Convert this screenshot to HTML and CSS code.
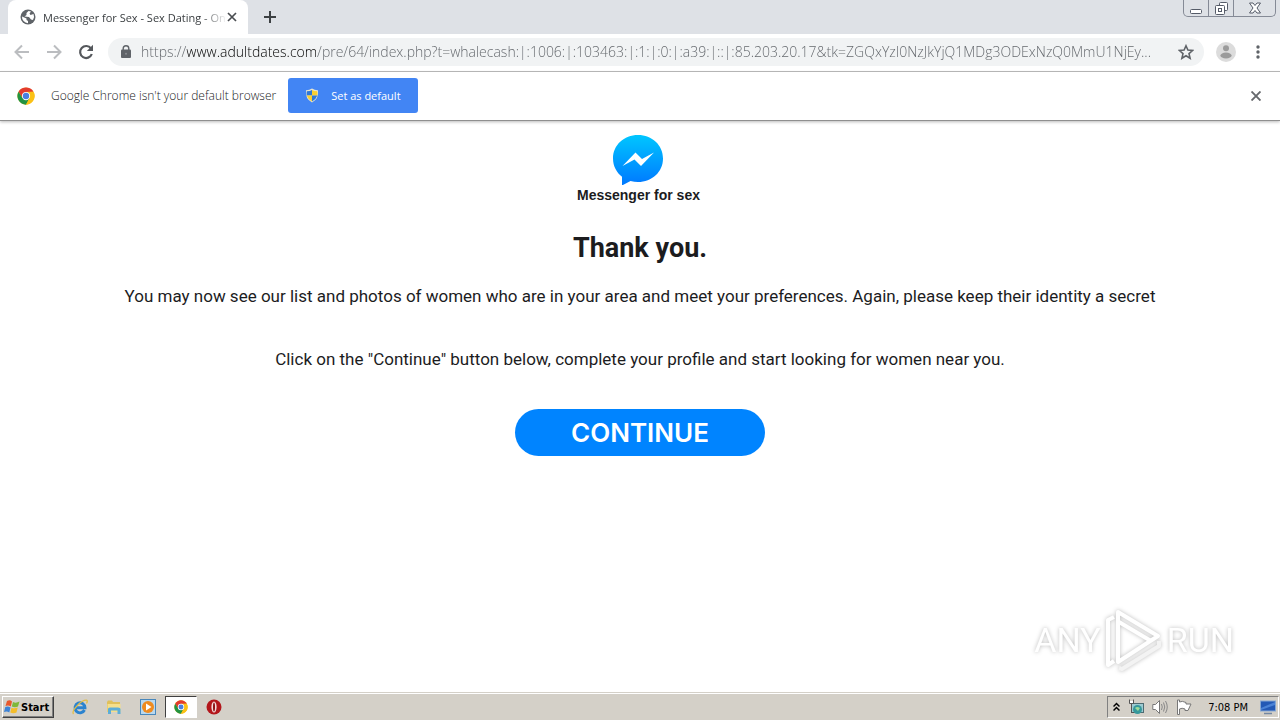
FILE: index.html
```html
<!DOCTYPE html>
<html lang="en">
<head>
<meta charset="UTF-8">
<title>Messenger for Sex - Sex Dating</title>
<link rel="stylesheet" href="styles.css">
</head>
<body>

	<!-- shared chrome logo -->
	<svg class="defs" width="0" height="0">
		<symbol id="chrome" viewBox="0 0 48 48">
			<circle cx="24" cy="24" r="23" fill="#fbc116"/>
			<path d="M4.100 12.500A23 23 0 0 1 43.900 12.500L24 13.500L14.500 29.500Z" fill="#e33b2e"/>
			<path d="M4.100 12.500A23 23 0 0 0 24 47L33.500 29.500L14.500 29.500Z" fill="#229342"/>
			<path d="M43.900 12.500A23 23 0 0 1 24 47L33.500 29.500L24 13Z" fill="#fbc116"/>
			<circle cx="24" cy="24" r="11" fill="#fff"/>
			<circle cx="24" cy="24" r="8.500" fill="#4a7fe0"/>
		</symbol>
	</svg>

	<div class="tabstrip">
		<div class="tab">
			<svg class="icon16" viewBox="0 0 16 16"><circle cx="8" cy="8" r="7.500" fill="#5f6368"/><path d="M2 7.500L6.500 9.500L6.500 11L8 12V14.200A6.300 6.300 0 0 1 2 7.500ZM8.500 2L6.500 4V6L4.500 7.500L9 8L11 10.500L13 11A6.300 6.300 0 0 0 13.500 5L10.500 6L9.500 4.500L11 2.500Z" fill="#fff"/></svg>
			<span class="tab-title">Messenger for Sex - Sex Dating - On</span>
			<button class="plain" type="button" aria-label="Close tab"><svg width="10" height="10" viewBox="0 0 10 10"><path d="M1 1L9 9M9 1L1 9" stroke="#4a4d51" stroke-width="1.700"/></svg></button>
		</div>
		<button class="plain newtab" type="button" aria-label="New tab"><svg width="12" height="12" viewBox="0 0 12 12"><path d="M6 0V12M0 6H12" stroke="#3c4043" stroke-width="2"/></svg></button>
		<div class="winbtns">
			<button type="button" aria-label="Minimize"><svg width="12" height="12" viewBox="0 0 12 12"><rect x=".5" y="7.500" width="11" height="4" rx="1" fill="#fff" stroke="#555b68"/></svg></button>
			<button type="button" aria-label="Restore"><svg width="13" height="13" viewBox="0 0 13 13"><rect x="4.500" y=".5" width="8" height="8" rx="1" fill="#fff" stroke="#555b68"/><rect x=".5" y="3.500" width="9" height="9" rx="1" fill="#fff" stroke="#555b68"/><rect x="3.500" y="6.500" width="3" height="3" fill="#fff" stroke="#555b68"/></svg></button>
			<button class="wide" type="button" aria-label="Close"><svg width="12" height="12" viewBox="0 0 12 12"><path d="M.5 1H4L6 3.500L8 1H11.500L8 6L11.500 11H8L6 8.500L4 11H.5L4 6Z" fill="#fff" stroke="#555b68"/></svg></button>
		</div>
	</div>

	<div class="toolbar">
		<button class="plain" type="button" aria-label="Back"><svg class="icon16" viewBox="0 0 16 16"><path d="M15 8H2M8 1.500L1.500 8L8 14.500" fill="none" stroke="#bbbdc0" stroke-width="2"/></svg></button>
		<button class="plain" type="button" aria-label="Forward"><svg class="icon16" viewBox="0 0 16 16"><path d="M1 8H14M8 1.500L14.500 8L8 14.500" fill="none" stroke="#bbbdc0" stroke-width="2"/></svg></button>
		<button class="plain" type="button" aria-label="Reload"><svg class="icon16" viewBox="0 0 16 16"><path d="M13 4.500A6 6 0 1 0 13.800 10" fill="none" stroke="#55585c" stroke-width="2.200"/><path d="M15 .8V7H8.800Z" fill="#55585c"/></svg></button>
		<div class="omnibox">
			<svg width="10" height="13" viewBox="0 0 10 13"><rect y="4.500" width="10" height="8.500" rx="1" fill="#5f6368"/><path d="M2.200 5V3.500A2.800 2.800 0 0 1 7.800 3.500V5" fill="none" stroke="#5f6368" stroke-width="1.400"/><circle cx="5" cy="8.700" r="1" fill="#8a8d91"/></svg>
			<input class="url" type="text" aria-label="Address" value="https://www.adultdates.com/pre/64/index.php?t=whalecash:|:1006:|:103463:|:1:|:0:|:a39:|::|:85.203.20.17&amp;tk=ZGQxYzI0NzJkYjQ1MDg3ODExNzQ0MmU1NjEy...">
			<button class="plain" type="button" aria-label="Bookmark"><svg class="icon16" viewBox="0 0 16 16"><path d="M8 1.800L9.900 6.100L14.600 6.500L11 9.600L12.100 14.200L8 11.700L3.900 14.200L5 9.600L1.400 6.500L6.100 6.100Z" fill="none" stroke="#5f6368" stroke-width="1.600"/></svg></button>
		</div>
		<button class="plain" type="button" aria-label="Profile"><svg width="20" height="20" viewBox="0 0 20 20"><circle cx="10" cy="10" r="10" fill="#dcdcdc"/><circle cx="10" cy="6.200" r="3" fill="#9b9b9b"/><ellipse cx="10" cy="13.500" rx="5.600" ry="3" fill="#9b9b9b"/></svg></button>
		<button class="plain" type="button" aria-label="Menu"><svg width="16" height="14" viewBox="0 0 16 14"><g fill="#5f6368"><circle cx="8" cy="2" r="1.700"/><circle cx="8" cy="7" r="1.700"/><circle cx="8" cy="12" r="1.700"/></g></svg></button>
	</div>

	<div class="infobar">
		<svg class="infologo"><use href="#chrome"/></svg>
		<span>Google Chrome isn't your default browser</span>
		<button class="default-btn" type="button">
			<svg width="14" height="15" viewBox="0 0 14 15"><path d="M7 .5Q4 2.500 1 2.300Q0 11 7 14.500Q14 11 13 2.300Q10 2.500 7 .5Z" fill="#e8e4cf"/><path d="M7 2V7.500H1.700Q1.400 5 1.800 3.300Q5 3.200 7 2Z" fill="#2f78d8"/><path d="M7 2Q9 3.200 12.200 3.300Q12.600 5 12.300 7.500H7Z" fill="#f8cf32"/><path d="M1.700 7.500H7V13.500Q2.800 11 1.700 7.500Z" fill="#f8cf32"/><path d="M7 7.500H12.300Q11.200 11 7 13.500Z" fill="#2f78d8"/></svg>
			Set as default
		</button>
		<button class="plain infoclose" type="button" aria-label="Dismiss"><svg width="10" height="10" viewBox="0 0 10 10"><path d="M.5 .5L9.500 9.500M9.500 .5L.5 9.500" stroke="#66696d" stroke-width="1.900"/></svg></button>
	</div>

	<main class="page">
		<div class="brand">
			<svg width="50" height="50" viewBox="0 0 50 50">
				<defs><linearGradient id="bubble" x1="0" y1="0" x2="0" y2="1"><stop offset="0" stop-color="#00c6ff"/><stop offset="1" stop-color="#0078ff"/></linearGradient></defs>
				<path d="M25 0C11 0 0 10 0 23.500C0 31 3.500 37.500 9 41.800V50.500L17.500 46C20 46.700 22.500 47 25 47C39 47 50 37 50 23.500C50 10 39 0 25 0Z" fill="url(#bubble)"/>
				<path d="M9.500 31L22.500 17.500L29 24L41 17.500L28 31L21.500 24.500Z" fill="#fff"/>
			</svg>
			<span>Messenger for sex</span>
		</div>
		<h1>Thank you.</h1>
		<p>You may now see our list and photos of women who are in your area and meet your preferences. Again, please keep their identity a secret</p>
		<p>Click on the "Continue" button below, complete your profile and start looking for women near you.</p>
		<button class="continue" type="button">CONTINUE</button>

		<div class="watermark">
			<span>ANY</span>
			<svg width="58" height="64" viewBox="0 0 58 64">
				<g fill="none" stroke-width="4" stroke-linejoin="round">
					<path d="M9 9L3 12V57L9 53" stroke="#fff"/>
					<path d="M14 60L17 61L54 38V33" stroke="#f3f3f3"/>
					<path d="M13 4L53 28L13 54Z" stroke="#fff"/>
					<path d="M14 14L46 33" stroke="#fff"/>
				</g>
			</svg>
			<span>RUN</span>
		</div>
	</main>

	<footer class="taskbar">
		<button class="start" type="button">
			<svg width="16" height="16" viewBox="0 0 16 16"><path d="M3 2Q6 .5 8 2.500L6.800 7.500Q4.500 6 1.500 7Z" fill="#e8582c"/><path d="M9 3Q12 4.500 15.500 2.500L14 7.500Q11 9 7.800 7.500Z" fill="#7eb83a"/><path d="M1.300 8Q4 7 6.500 8.500L5.300 13.500Q3 12 0 13Z" fill="#3d83d6"/><path d="M7.500 8.700Q10.500 10 13.700 8.500L12.500 13.500Q9.500 15 6.300 13.500Z" fill="#f4bd2a"/></svg>
			Start
		</button>
		<div class="quick">
			<button class="plain" type="button" aria-label="Internet Explorer"><svg class="icon16" viewBox="0 0 16 16"><path d="M12.500 11A5 5 0 1 1 13 8.800H4" fill="none" stroke="#2b83cf" stroke-width="2.900"/><path d="M1.500 15C-1 12 9 1 14.500 1.200Q16 1.500 14.500 4.500" fill="none" stroke="#e3bd45" stroke-width="1.300"/></svg></button>
			<button class="plain" type="button" aria-label="Explorer"><svg class="icon16" viewBox="0 0 16 16"><path d="M1 3L2 1.500H6L7 3H14V13H1Z" fill="#e0c05a"/><path d="M1.500 5H14.500V13H1.500Z" fill="#f5df8c"/><path d="M2 15V10Q2 8.500 4 8.500H12Q14.500 8.500 14.500 10V15H11.500V11.500H5V15Z" fill="#5cadd8"/></svg></button>
			<button class="plain" type="button" aria-label="Media Player"><svg class="icon16" viewBox="0 0 16 16"><rect x=".5" y=".5" width="15" height="15" fill="#b9d8ee" stroke="#4887bb"/><circle cx="8" cy="8" r="6" fill="#ef8b1f"/><path d="M6 4.500L11.500 8L6 11.500Z" fill="#fff"/></svg></button>
			<button class="plain active" type="button" aria-label="Chrome"><svg width="14" height="14"><use href="#chrome"/></svg></button>
			<button class="plain" type="button" aria-label="Opera"><svg class="icon16" viewBox="0 0 16 16"><circle cx="8" cy="8" r="7.500" fill="#b3161b"/><ellipse cx="8" cy="8" rx="2.600" ry="5.500" fill="#f4dddd"/><ellipse cx="8" cy="8" rx="1" ry="4.500" fill="#8e1014"/></svg></button>
		</div>
		<div class="tray">
			<svg width="7" height="10" viewBox="0 0 7 10"><path d="M.5 4.500L3.500 1.500L6.500 4.500M.5 8.500L3.500 5.500L6.500 8.500" fill="none" stroke="#000" stroke-width="1.500"/></svg>
			<svg class="icon16" viewBox="0 0 16 16"><rect x="3.500" y="4.500" width="12" height="9" fill="#9dcbd2" stroke="#4d6b72"/><circle cx="9.500" cy="10.500" r="4.500" fill="#36989b"/><path d="M7 9Q9 7 12 9L10 12Z" fill="#9ddd9a"/><path d="M1.500 .5V4.500H5.500V.5M3.500 5V13.500H6" fill="none" stroke="#555"/><path d="M2 2H5V4H2Z" fill="#fff"/></svg>
			<svg class="icon16" viewBox="0 0 16 16"><path d="M.8 5.500H3.500L7.500 1.500V14.500L3.500 10.500H.8Z" fill="#fff" stroke="#777"/><path d="M9.500 5Q11 8 9.500 11M11.500 3.500Q14 8 11.500 12.500M13.500 2Q17 8 13.500 14" fill="none" stroke="#888"/></svg>
			<svg class="icon16" viewBox="0 0 16 16"><path d="M1.500 1V15.500H3.500V10Q6 8.500 9 10V11.500H12L15 5H10V3.500Q6 1.500 3.500 3V1Z" fill="#fff" stroke="#777"/></svg>
			<span class="clock">7:08 PM</span>
			<svg class="icon16" viewBox="0 0 16 16"><rect x=".5" y="2" width="15" height="10" fill="#2359b5" stroke="#86a7d3"/><path d="M1 9L15 3V6L1 11Z" fill="#4b83d6"/><path d="M4 14.500H12" stroke="#7387a1" stroke-width="1.500"/></svg>
		</div>
	</footer>

</body>
</html>
```
FILE: styles.css
```css
* {
	box-sizing: border-box;
}

body {
	margin: 0;
	min-height: 100vh;
	display: flex;
	flex-direction: column;
	background-color: #fff;
	font-family: "Open Sans", "Noto Sans", sans-serif;
	font-size: 12px;
	color: #3c4043;
}

svg {
	display: block;
	flex: none;
}

.defs {
	position: absolute;
}

.icon16 {
	width: 16px;
	height: 16px;
}

button {
	font-family: inherit;
}

button.plain {
	border: none;
	background: none;
	padding: 0;
}

/* tabs */
.tabstrip {
	display: flex;
	align-items: center;
	height: 34px;
	padding-left: 8px;
	background-color: #dee1e6;
}

.tab {
	display: flex;
	align-items: center;
	width: 240px;
	height: 34px;
	padding: 0 11px 0 12px;
	background-color: #fff;
	border-radius: 8px 8px 0 0;
}

.tab-title {
	flex: 1;
	margin: 0 0 0 7px;
	font-size: 11px;
	white-space: nowrap;
	-webkit-mask-image: linear-gradient(to right, #000 86%, transparent);
	mask-image: linear-gradient(to right, #000 86%, transparent);
}

.newtab {
	margin-left: 16px;
}

.winbtns {
	display: flex;
	align-self: flex-start;
	margin: 0 4px 0 auto;
	height: 17px;
	border: 1px solid #858a96;
	border-top: none;
	border-radius: 0 0 5px 5px;
}

.winbtns button {
	display: flex;
	align-items: center;
	justify-content: center;
	width: 25px;
	padding: 0;
	border: none;
	border-right: 1px solid #858a96;
	background: none;
}

.winbtns button.wide {
	width: 41px;
	border-right: none;
}

/* address row */
.toolbar {
	display: flex;
	align-items: center;
	gap: 16px;
	height: 38px;
	padding: 0 14px 2px;
	border-bottom: 1px solid #b4b4b4;
}

.omnibox {
	flex: 1;
	display: flex;
	align-items: center;
	height: 28px;
	margin: 0 -4px 0 -2px;
	padding: 0 10px 0 13px;
	border-radius: 14px;
	background-color: #f1f3f4;
}

.toolbar .omnibox + button {
	margin-right: -2px;
}

.url {
	flex: 1;
	min-width: 0;
	margin: 0 8px 0 10px;
	padding: 0;
	border: none;
	outline: none;
	font-family: "Open Sans", "Noto Sans", sans-serif;
	font-size: 14px;
	font-weight: 300;
	/* host name is darker than the rest */
	color: transparent;
	background: linear-gradient(to right, #5f6368 46px, #000 46px, #000 176px, #5f6368 176px);
	-webkit-background-clip: text;
	background-clip: text;
}

/* default browser bar */
.infobar {
	display: flex;
	align-items: center;
	height: 49px;
	padding: 0 19px 1px 17px;
	border-bottom: 1px solid #8f8f8f;
	box-shadow: 0 1px 3px #bbb;
	font-weight: 300;
	color: #202124;
}

.infologo {
	width: 18px;
	height: 18px;
	margin-right: 16px;
}

.default-btn {
	display: flex;
	align-items: center;
	gap: 12px;
	height: 35px;
	margin-left: 12px;
	padding: 0 17px;
	border: none;
	border-radius: 3px;
	background-color: #4285f4;
	color: #fff;
	font-size: 11px;
}

.infoclose {
	margin-left: auto;
}

/* page content */
.page {
	position: relative;
	flex: 1;
	display: flex;
	flex-direction: column;
	align-items: center;
	padding-top: 14px;
	font-family: Roboto, sans-serif;
	color: #1c1c1e;
}

.brand {
	display: flex;
	flex-direction: column;
	align-items: center;
	padding-right: 3px;
	font: bold 14px/20px "Liberation Sans", Arial, sans-serif;
}

h1 {
	margin: 25px 0 16px;
	font-size: 27px;
	line-height: 36px;
	font-weight: 700;
}

.page p {
	margin: 0 0 35px;
	font-size: 17px;
	line-height: 28px;
	text-align: center;
}

.continue {
	width: 250px;
	height: 47px;
	margin-top: 1px;
	border: none;
	border-radius: 24px;
	background-color: #0084ff;
	color: #fff;
	font-family: Inter, sans-serif;
	font-size: 26px;
	font-weight: 600;
}

.watermark {
	position: absolute;
	right: 46px;
	bottom: 20px;
	display: flex;
	align-items: center;
	gap: 4px;
	color: #fff;
	font: 34px Roboto, sans-serif;
	filter: drop-shadow(0 0 2px #bbb);
}

/* taskbar */
.taskbar {
	display: flex;
	align-items: center;
	height: 28px;
	padding: 1px 1px 0 2px;
	border-top: 1px solid #d4d0c8;
	box-shadow: inset 0 1px #fff;
	background-color: #d4d0c8;
	color: #000;
}

.start {
	display: flex;
	align-items: center;
	gap: 1px;
	width: 52px;
	height: 22px;
	padding: 0 1px;
	border: 1px solid;
	border-color: #fff #404040 #404040 #fff;
	box-shadow: inset -1px -1px #808080;
	background-color: #d4d0c8;
	color: #000;
	font: bold 11px "DejaVu Sans Condensed", "DejaVu Sans", sans-serif;
}

.quick {
	display: flex;
	align-items: center;
	margin-left: 9px;
}

.quick button {
	display: flex;
	align-items: center;
	justify-content: center;
	width: 34px;
	height: 22px;
}

.quick button.active {
	width: 32px;
	border: 1px solid;
	border-color: #404040 #fff #fff #404040;
	background-color: #fff;
}

.tray {
	display: flex;
	align-items: center;
	gap: 8px;
	height: 22px;
	margin-left: auto;
	padding: 0 2px 0 5px;
	border: 1px solid;
	border-color: #808080 #fff #fff #808080;
}

.clock {
	margin: 0 4px 0 8px;
	font-family: "DejaVu Sans Condensed", "DejaVu Sans", sans-serif;
	font-size: 11px;
}
```
